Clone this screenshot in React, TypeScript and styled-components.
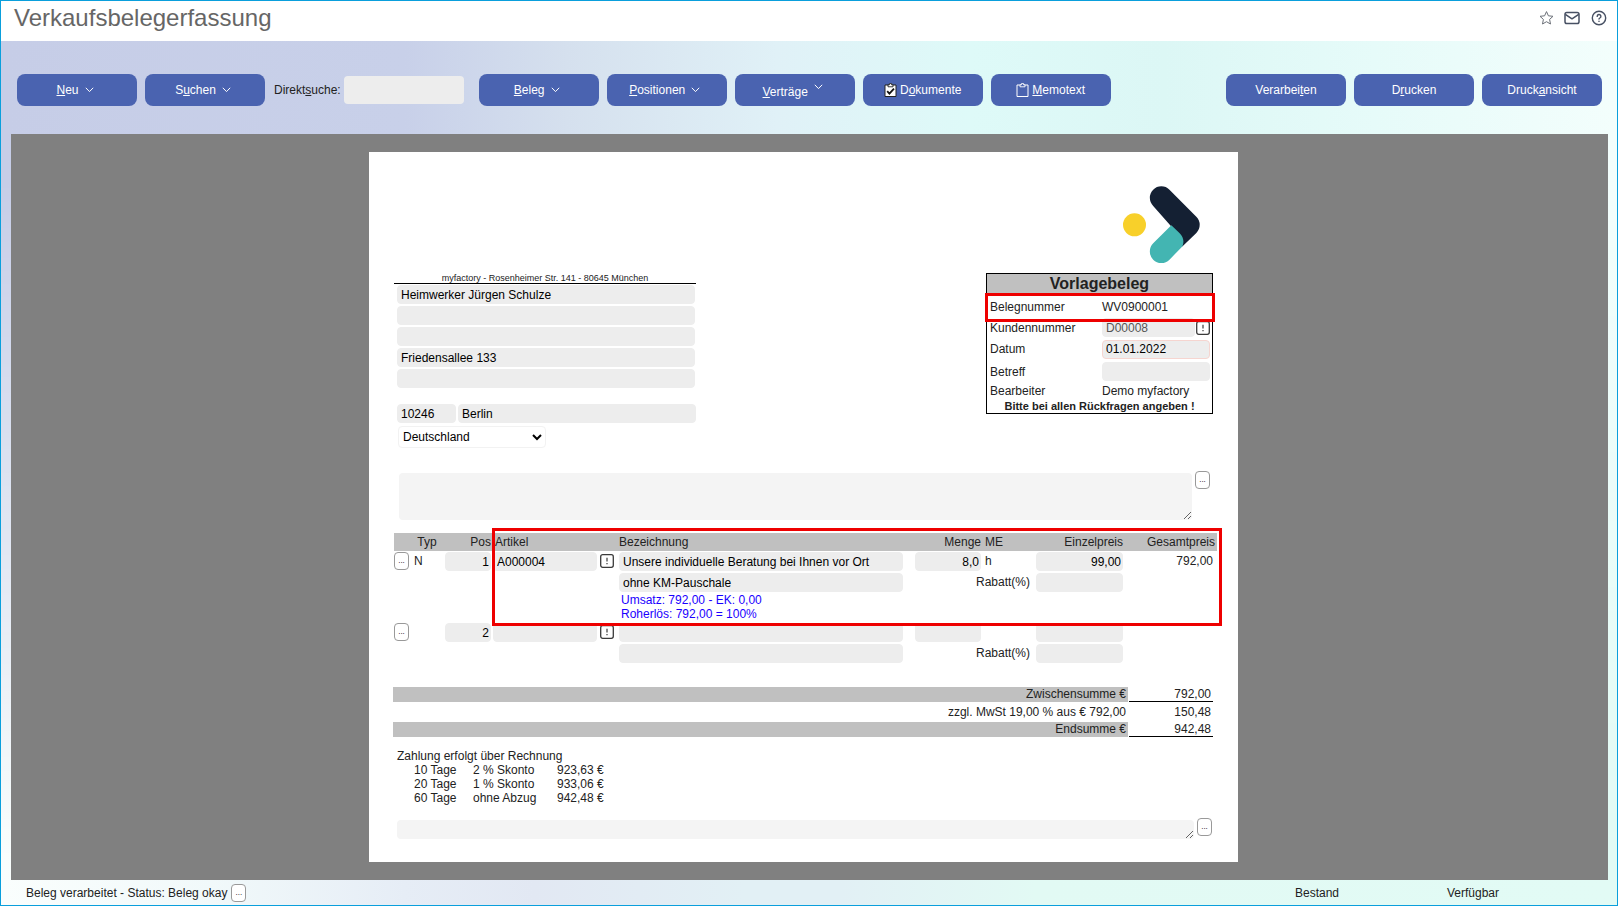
import React from "react";
import styled, { createGlobalStyle, css } from "styled-components";

const GlobalStyle = createGlobalStyle`
  *, *::before, *::after { box-sizing: border-box; }
  body {
    margin: 0;
    font-family: "Liberation Sans", Arial, sans-serif;
    font-size: 12px;
    line-height: 14px;
    color: #222;
  }
  button, input, select, textarea { font: inherit; color: #000; margin: 0; }
`;

const Page = styled.div`
  position: relative;
  isolation: isolate;
  display: flex;
  flex-direction: column;
  min-height: 100vh;
  border: 1px solid #0a9fdc;
  background: linear-gradient(to right, #fafefd 0%, #f1f9fa 13%, #e6edf6 25%, #e2e8f3 33%, #e2f0f5 46%, #e2f0f5 52%, #e2faf4 64%, #e2fbf5 100%);
  &::before {
    content: "";
    position: absolute;
    inset: 0;
    z-index: -1;
    background: linear-gradient(to right, #c6cde7 0%, #c8d0e9 25%, #d5e0ee 35%, #e0f1f7 48%, #defaf8 60%, #dcf7f5 72%, #e6fbf9 85%, #f3fefc 100%);
    mask-image: linear-gradient(to bottom, #000 20%, transparent 95%);
  }
`;

const TitleBar = styled.header`
  display: flex;
  align-items: flex-start;
  justify-content: space-between;
  height: 40px;
  padding: 2px 10px 0 13px;
  background: #fff;
`;

const Title = styled.h1`
  margin: 0;
  font-size: 24px;
  line-height: 30px;
  font-weight: 400;
  color: #666;
`;

const TitleIcons = styled.div`
  display: flex;
  align-items: center;
  gap: 8px;
  padding-top: 6px;
`;

const IconButton = styled.button`
  display: flex;
  padding: 0;
  border: 0;
  background: none;
`;

const Toolbar = styled.nav`
  display: flex;
  align-items: center;
  gap: 8px;
  height: 93px;
  padding: 5px 15px 0 16px;
`;

const ToolButton = styled.button<{ $menu?: boolean; $staggered?: boolean }>`
  display: flex;
  align-items: center;
  justify-content: center;
  gap: 6px;
  width: 120px;
  height: 32px;
  padding: 0;
  border: 0;
  border-radius: 8px;
  background: #4a63b0;
  color: #fff;
  white-space: nowrap;
  ${(p) => p.$menu && "padding-right: 4px;"}
  ${(p) =>
    p.$staggered &&
    css`
      align-items: flex-end;
      padding-bottom: 7px;
      svg { align-self: center; }
    `}
`;

const IconLabel = styled.span`
  display: flex;
  align-items: center;
  gap: 3px;
`;

const SearchField = styled.label`
  display: flex;
  align-items: center;
  gap: 3px;
  padding: 0 7px 0 1px;
`;

const SearchInput = styled.input`
  width: 120px;
  height: 28px;
  border: 0;
  border-radius: 4px;
  background: #ededed;
`;

const Spacer = styled.div`
  flex: 1;
`;

const Workspace = styled.main`
  flex: 1;
  display: flex;
  justify-content: center;
  margin: 0 9px 0 10px;
  padding: 18px 12px 18px 0;
  background: #808080;
`;

const Paper = styled.section`
  width: 100%;
  max-width: 869px;
  padding: 34px 25px 23px;
  background: #fff;
`;

const LogoRow = styled.div`
  display: flex;
  justify-content: flex-end;
  height: 87px;
  padding-right: 13px;
`;

const HeadRow = styled.div`
  display: flex;
  align-items: flex-start;
  justify-content: space-between;
  height: 198px;
`;

const Address = styled.address`
  width: 302px;
  font-style: normal;
`;

const Sender = styled.div`
  height: 11px;
  border-bottom: 1px solid #000;
  font-size: 9px;
  line-height: 10px;
  text-align: center;
`;

const AddressLines = styled.div`
  display: flex;
  flex-direction: column;
  gap: 2px;
  padding: 1px 1px 0 3px;
`;

const Field = styled.input<{ $w?: number; $right?: boolean; $tone?: "warn" | "locked" }>`
  display: block;
  width: ${(p) => (p.$w ? `${p.$w}px` : "100%")};
  height: 19px;
  padding: 0 3px;
  border: 1px solid ${(p) => (p.$tone === "warn" ? "#f6d5d0" : "#ededed")};
  border-radius: 4px;
  background: #ededed;
  text-align: ${(p) => (p.$right ? "right" : "left")};
  ${(p) => p.$right && "padding: 0 1px; margin-left: auto;"}
  ${(p) => p.$tone === "locked" && "color: #555;"}
`;

const TownRow = styled.div`
  display: flex;
  gap: 2px;
  padding: 16px 0 0 3px;
`;

const CountryWrap = styled.div`
  position: relative;
  width: 148px;
  margin: 3px 0 0 4px;
  svg { position: absolute; right: 4px; top: 8px; pointer-events: none; }
`;

const CountrySelect = styled.select`
  display: block;
  width: 100%;
  height: 22px;
  padding: 0 4px;
  border: 1px solid #f2f2f2;
  border-radius: 4px;
  background: #fff;
  appearance: none;
`;

const InfoBox = styled.div`
  position: relative;
  width: 227px;
  height: 141px;
  border: 1px solid #000;
`;

const InfoTitle = styled.h2`
  margin: 0;
  height: 21px;
  background: #c0c0c0;
  font-size: 16px;
  line-height: 20px;
  text-align: center;
`;

const InfoRow = styled.div<{ $h: number }>`
  display: grid;
  grid-template-columns: 112px 1fr;
  align-items: center;
  height: ${(p) => p.$h}px;
  padding: 0 2px 0 3px;
`;

const InfoValue = styled.div`
  display: flex;
  align-items: center;
  justify-content: space-between;
`;

const InfoNote = styled.p`
  margin: 0;
  font-size: 11px;
  line-height: 12px;
  font-weight: 700;
  text-align: center;
`;

const Highlight = styled.div<{ $box: string }>`
  position: absolute;
  inset: ${(p) => p.$box};
  border: 3px solid #ee0000;
  pointer-events: none;
`;

const NoteRow = styled.div<{ $left: number; $right: number }>`
  display: flex;
  align-items: flex-start;
  gap: 3px;
  padding: 0 ${(p) => p.$right}px 0 ${(p) => p.$left}px;
`;

const Note = styled.textarea<{ $h: number }>`
  flex: 1;
  display: block;
  height: ${(p) => p.$h}px;
  margin-top: 2px;
  border: 0;
  border-radius: 4px;
  background: #f4f4f4;
  resize: vertical;
`;

const MoreButton = styled.button`
  display: block;
  flex: none;
  width: 15px;
  height: 18px;
  padding: 0;
  border: 1px solid #999;
  border-radius: 4px;
  background: #fff;
  font-size: 8px;
  line-height: 16px;
`;

const ItemsWrap = styled.div`
  position: relative;
  margin: 13px -4px 0 0;
`;

const Items = styled.table`
  width: 100%;
  table-layout: fixed;
  border-collapse: collapse;
  th {
    height: 18px;
    padding: 0 2px;
    background: #c0c0c0;
    font-weight: 400;
    text-align: left;
  }
  td { height: 21px; padding: 1px 2px; vertical-align: top; line-height: 18px; }
  th.right { text-align: right; }
  td.right { padding-right: 4px; text-align: right; }
  td.flush { padding: 1px 0; }
  td.icon { padding: 3px 0 0; }
  td.blue { height: 29px; padding: 0 4px; line-height: 14px; color: #1a00ff; }
`;

const Totals = styled.table`
  width: calc(100% + 1px);
  margin: 23px 0 0 -1px;
  table-layout: fixed;
  border-collapse: separate;
  border-spacing: 0;
  th, td { height: 15px; padding: 0 2px 0 0; font-weight: 400; line-height: 14px; text-align: right; }
  th { border-right: 1px solid #fff; vertical-align: top; }
  tr.plain > * { height: 20px; vertical-align: middle; }
  tr.bar th { background: #c0c0c0; }
  tr.bar td { border-bottom: 1px solid #000; }
`;

const Payment = styled.section`
  padding: 12px 0 13px 3px;
`;

const Terms = styled.table`
  margin-left: 17px;
  border-collapse: collapse;
  td { padding: 0; height: 14px; }
`;

const StatusBar = styled.footer`
  display: flex;
  align-items: center;
  gap: 4px;
  height: 25px;
  padding: 1px 118px 0 25px;
`;

const StockLabel = styled.span<{ $w?: number }>`
  width: ${(p) => (p.$w ? `${p.$w}px` : "auto")};
`;

const Chevron = () => (
  <svg width="9" height="6" viewBox="0 0 9 6" fill="none" stroke="#fff" aria-hidden="true">
    <path d="M.8.8 4.5 4.6 8.2.8" />
  </svg>
);

const Alert = () => (
  <IconButton type="button" aria-label="Info">
    <svg width="14" height="14" viewBox="0 0 14 14" fill="none" stroke="#3a3a3a" aria-hidden="true">
      <rect x=".7" y=".7" width="12.600" height="12.600" rx="2" strokeWidth="1.300" />
      <path d="M7 3.800v3.800M7 8.900v1.300" strokeWidth="1.200" />
    </svg>
  </IconButton>
);

const Clip = ({ checked }: { checked?: boolean }) => (
  <svg width="13" height="14" viewBox="0 0 13 14" aria-hidden="true">
    <path d="M1 2h11v11.5H1z" fill={checked ? "#fff" : "none"} stroke={checked ? "#222" : "#fff"} />
    <path d="M4 3.8V1.8h1.4V.6h2.2v1.2H9v2z" fill={checked ? "#fff" : "#4a63b0"} stroke={checked ? "#222" : "#fff"} strokeWidth=".9" />
    {checked && <path d="M3.2 8.2 5.4 10.6 10 5.6" fill="none" stroke="#111" strokeWidth="1.8" />}
  </svg>
);

const Logo = () => (
  <svg width="77" height="78" viewBox="490 107 231 233" role="img" aria-label="myfactory">
    <circle cx="524.5" cy="223" r="34.5" fill="#f8d02a" />
    <path d="M629.4 117.6 710 198.6a34.5 34.5 0 0 1 0 48.8L668 288 633 226 580.6 166.4a34.5 34.5 0 0 1 48.8-48.8z" fill="#142033" />
    <path d="M635 224 580.6 278.6a34.5 34.5 0 0 0 48.8 48.8L668 288C674 275 672 259 660 248z" fill="#43b5b2" />
  </svg>
);

const K = ({ t }: { t: string }) => {
  const [a, k, b] = t.split("|");
  return (
    <span>
      {a}
      <u>{k}</u>
      {b}
    </span>
  );
};

const COLUMNS = [18, 31, 50, 107, 17, 288, 78, 51, 91, 92];

const ITEMS = [
  { pos: "1", type: "N", article: "A000004", text: "Unsere individuelle Beratung bei Ihnen vor Ort", text2: "ohne KM-Pauschale", qty: "8,0", unit: "h", price: "99,00", total: "792,00", margin: ["Umsatz: 792,00 - EK: 0,00", "Roherlös: 792,00 = 100%"] },
  { pos: "2", type: "", article: "", text: "", text2: "", qty: "", unit: "", price: "", total: "", margin: null },
];

const TERMS = [
  ["10 Tage", "2 % Skonto", "923,63 €"],
  ["20 Tage", "1 % Skonto", "933,06 €"],
  ["60 Tage", "ohne Abzug", "942,48 €"],
];

export default function App() {
  return (
    <>
      <GlobalStyle />
      <Page>
        <TitleBar>
          <Title>Verkaufsbelegerfassung</Title>
          <TitleIcons>
            <IconButton type="button" aria-label="Favorit">
              <svg width="18" height="18" viewBox="0 0 18 18" fill="none" stroke="#6b7078" strokeLinejoin="round">
                <path d="m9.500 2.600 1.900 4.200 4.600.5-3.400 3.100.9 4.600-4-2.300-4 2.300.9-4.600L3 7.300l4.600-.5z" />
              </svg>
            </IconButton>
            <IconButton type="button" aria-label="Nachricht">
              <svg width="18" height="18" viewBox="0 0 18 18" fill="none" stroke="#475063" strokeWidth="1.5" strokeLinejoin="round">
                <rect x="2" y="3.5" width="14" height="11" rx="1.8" />
                <path d="m2.3 5.3 6.700 4.500 6.700-4.500" />
              </svg>
            </IconButton>
            <IconButton type="button" aria-label="Hilfe">
              <svg width="18" height="18" viewBox="0 0 18 18" fill="none" stroke="#475063" strokeWidth="1.4" strokeLinecap="round">
                <circle cx="10" cy="9" r="6.7" />
                <path d="M8.200 7.400a1.850 1.850 0 1 1 2.700 1.600c-.6.3-.9.6-.9 1.100M10 12.300v.1" />
              </svg>
            </IconButton>
          </TitleIcons>
        </TitleBar>

        <Toolbar>
          <ToolButton type="button" $menu><K t="|N|eu" /><Chevron /></ToolButton>
          <ToolButton type="button" $menu><K t="S|u|chen" /><Chevron /></ToolButton>
          <SearchField>
            <K t="Direkt|s|uche:" />
            <SearchInput type="text" />
          </SearchField>
          <ToolButton type="button" $menu><K t="|B|eleg" /><Chevron /></ToolButton>
          <ToolButton type="button" $menu><K t="|P|ositionen" /><Chevron /></ToolButton>
          <ToolButton type="button" $menu $staggered><K t="|V|erträge" /><Chevron /></ToolButton>
          <ToolButton type="button"><IconLabel><Clip checked /><K t="D|o|kumente" /></IconLabel></ToolButton>
          <ToolButton type="button"><IconLabel><Clip /><K t="|M|emotext" /></IconLabel></ToolButton>
          <Spacer />
          <ToolButton type="button"><K t="Verarbei|t|en" /></ToolButton>
          <ToolButton type="button"><K t="D|r|ucken" /></ToolButton>
          <ToolButton type="button"><K t="Druck|a|nsicht" /></ToolButton>
        </Toolbar>

        <Workspace>
          <Paper>
            <LogoRow><Logo /></LogoRow>
            <HeadRow>
              <Address>
                <Sender>myfactory - Rosenheimer Str. 141 - 80645 München</Sender>
                <AddressLines>
                  <Field aria-label="Name" defaultValue="Heimwerker Jürgen Schulze" />
                  <Field aria-label="Zusatz 1" />
                  <Field aria-label="Zusatz 2" />
                  <Field aria-label="Straße" defaultValue="Friedensallee 133" />
                  <Field aria-label="Zusatz 3" />
                </AddressLines>
                <TownRow>
                  <Field $w={59} aria-label="PLZ" defaultValue="10246" />
                  <Field $w={238} aria-label="Ort" defaultValue="Berlin" />
                </TownRow>
                <CountryWrap>
                  <CountrySelect aria-label="Land"><option>Deutschland</option></CountrySelect>
                  <svg width="10" height="7" viewBox="0 0 10 7" fill="none" stroke="#000" strokeWidth="2"><path d="m1 1 4 4 4-4" /></svg>
                </CountryWrap>
              </Address>
              <InfoBox>
                <InfoTitle>Vorlagebeleg</InfoTitle>
                <InfoRow $h={23}><span>Belegnummer</span><span>WV0900001</span></InfoRow>
                <InfoRow $h={19}>
                  <label htmlFor="customer">Kundennummer</label>
                  <InfoValue>
                    <Field id="customer" $w={93} $tone="locked" readOnly defaultValue="D00008" />
                    <Alert />
                  </InfoValue>
                </InfoRow>
                <InfoRow $h={24}><label htmlFor="date">Datum</label><Field id="date" $tone="warn" defaultValue="01.01.2022" /></InfoRow>
                <InfoRow $h={21}><label htmlFor="subject">Betreff</label><Field id="subject" /></InfoRow>
                <InfoRow $h={18}><span>Bearbeiter</span><span>Demo myfactory</span></InfoRow>
                <InfoNote>Bitte bei allen Rückfragen angeben !</InfoNote>
                <Highlight $box="19px -3px 91px -2px" />
              </InfoBox>
            </HeadRow>

            <NoteRow $left={5} $right={3}>
              <Note $h={47} aria-label="Kopftext" />
              <MoreButton type="button">...</MoreButton>
            </NoteRow>

            <ItemsWrap>
              <Items>
                <colgroup>{COLUMNS.map((w, i) => <col key={i} width={w} />)}</colgroup>
                <thead>
                  <tr>
                    <th />
                    <th>&nbsp;Typ</th>
                    <th className="right">Pos</th>
                    <th>Artikel</th>
                    <th />
                    <th>Bezeichnung</th>
                    <th className="right">Menge</th>
                    <th>ME</th>
                    <th className="right">Einzelpreis</th>
                    <th className="right">Gesamtpreis</th>
                  </tr>
                </thead>
                {ITEMS.map((it) => (
                  <tbody key={it.pos}>
                    <tr>
                      <td className="flush"><MoreButton type="button">...</MoreButton></td>
                      <td>{it.type}</td>
                      <td><Field $right aria-label="Pos" defaultValue={it.pos} /></td>
                      <td className="flush"><Field aria-label="Artikel" defaultValue={it.article} $w={104} /></td>
                      <td className="icon"><Alert /></td>
                      <td><Field aria-label="Bezeichnung" defaultValue={it.text} /></td>
                      <td><Field $right $w={66} aria-label="Menge" defaultValue={it.qty} /></td>
                      <td>{it.unit}</td>
                      <td><Field $right aria-label="Einzelpreis" defaultValue={it.price} /></td>
                      <td className="right">{it.total}</td>
                    </tr>
                    <tr>
                      <td colSpan={5} />
                      <td><Field aria-label="Bezeichnung 2" defaultValue={it.text2} /></td>
                      <td colSpan={2} className="right">Rabatt(%)</td>
                      <td><Field $right aria-label="Rabatt" /></td>
                      <td />
                    </tr>
                    {it.margin && (
                      <tr>
                        <td colSpan={5} />
                        <td className="blue">{it.margin[0]}<br />{it.margin[1]}</td>
                        <td colSpan={4} />
                      </tr>
                    )}
                  </tbody>
                ))}
              </Items>
              <Highlight $box="-5px -5px 38px 98px" />
            </ItemsWrap>

            <Totals>
              <colgroup><col /><col width={84} /></colgroup>
              <tbody>
                <tr className="bar"><th>Zwischensumme €</th><td>792,00</td></tr>
                <tr className="plain"><th>zzgl. MwSt 19,00 % aus € 792,00</th><td>150,48</td></tr>
                <tr className="bar"><th>Endsumme €</th><td>942,48</td></tr>
              </tbody>
            </Totals>

            <Payment>
              Zahlung erfolgt über Rechnung
              <Terms>
                <colgroup><col width={59} /><col width={84} /><col /></colgroup>
                <tbody>
                  {TERMS.map((r) => <tr key={r[0]}>{r.map((c) => <td key={c}>{c}</td>)}</tr>)}
                </tbody>
              </Terms>
            </Payment>

            <NoteRow $left={3} $right={1}>
              <Note $h={19} aria-label="Fußtext" />
              <MoreButton type="button">...</MoreButton>
            </NoteRow>
          </Paper>
        </Workspace>

        <StatusBar>
          <span>Beleg verarbeitet - Status: Beleg okay</span>
          <MoreButton type="button">...</MoreButton>
          <Spacer />
          <StockLabel $w={148}>Bestand</StockLabel>
          <StockLabel>Verfügbar</StockLabel>
        </StatusBar>
      </Page>
    </>
  );
}
